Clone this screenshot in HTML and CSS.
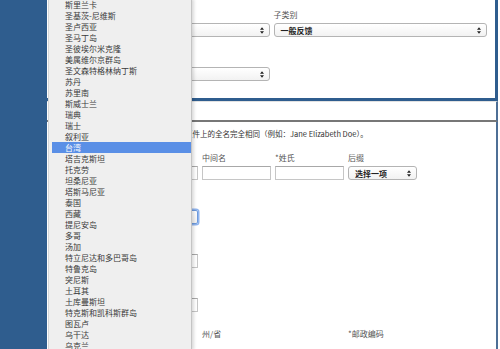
FILE: index.html
```html
<!DOCTYPE html>
<html lang="zh-CN">
<head>
  <meta charset="UTF-8">
  <title>联系我们</title>
  <link rel="stylesheet" href="styles.css">
</head>
<body>
  <div class="page">
    <aside class="side"></aside>

    <main class="main">
      <!-- 问题类别 -->
      <section class="panel panel-top">
        <div class="row two">
          <div class="field">
            <label>*类别</label>
            <div class="select"><span>请选择</span><svg class="arrows" viewBox="0 0 5 8"><path d="M2.5 0L5 3H0z M2.5 8L0 5h5z"/></svg></div>
          </div>
          <div class="field">
            <label>子类别</label>
            <div class="select"><span>一般反馈</span><svg class="arrows" viewBox="0 0 5 8"><path d="M2.5 0L5 3H0z M2.5 8L0 5h5z"/></svg></div>
          </div>
        </div>
        <div class="row two">
          <div class="field">
            <label>*主题</label>
            <div class="select"><span>选择一项</span><svg class="arrows" viewBox="0 0 5 8"><path d="M2.5 0L5 3H0z M2.5 8L0 5h5z"/></svg></div>
          </div>
        </div>
      </section>

      <section class="panel panel-strip">
        <h2>联系信息</h2>
      </section>

      <!-- 个人信息 -->
      <section class="panel panel-form">
        <p class="note">*请确保您输入的姓名与政府签发的身份证件上的全名完全相同（例如：Jane Elizabeth Doe）。</p>

        <div class="row five">
          <div class="field">
            <label>称谓</label>
            <div class="select"><span>选择一项</span><svg class="arrows" viewBox="0 0 5 8"><path d="M2.5 0L5 3H0z M2.5 8L0 5h5z"/></svg></div>
          </div>
          <div class="field"><label>*名字</label><input type="text"></div>
          <div class="field"><label>中间名</label><input type="text"></div>
          <div class="field"><label>*姓氏</label><input type="text"></div>
          <div class="field">
            <label>后缀</label>
            <div class="select"><span>选择一项</span><svg class="arrows" viewBox="0 0 5 8"><path d="M2.5 0L5 3H0z M2.5 8L0 5h5z"/></svg></div>
          </div>
        </div>

        <div class="row five">
          <div class="field span2">
            <label>*国家/地区</label>
            <div class="select focused"><span>台湾</span><svg class="arrows" viewBox="0 0 5 8"><path d="M2.5 0L5 3H0z M2.5 8L0 5h5z"/></svg></div>
          </div>
        </div>

        <div class="row five">
          <div class="field span2"><label>*地址 1</label><input type="text"></div>
        </div>

        <div class="row five">
          <div class="field span2"><label>地址 2</label><input type="text"></div>
        </div>

        <div class="row five">
          <div class="field span2"><label>*城市</label></div>
          <div class="field span2"><label>州/省</label></div>
          <div class="field"><label>*邮政编码</label></div>
        </div>
      </section>
    </main>

    <!-- 打开的国家下拉列表 -->
    <ul class="menu">
      <li>斯里兰卡</li>
      <li>圣基茨-尼维斯</li>
      <li>圣卢西亚</li>
      <li>圣马丁岛</li>
      <li>圣彼埃尔米克隆</li>
      <li>美属维尔京群岛</li>
      <li>圣文森特格林纳丁斯</li>
      <li>苏丹</li>
      <li>苏里南</li>
      <li>斯威士兰</li>
      <li>瑞典</li>
      <li>瑞士</li>
      <li>叙利亚</li>
      <li class="selected">台湾</li>
      <li>塔吉克斯坦</li>
      <li>托克劳</li>
      <li>坦桑尼亚</li>
      <li>塔斯马尼亚</li>
      <li>泰国</li>
      <li>西藏</li>
      <li>提尼安岛</li>
      <li>多哥</li>
      <li>汤加</li>
      <li>特立尼达和多巴哥岛</li>
      <li>特鲁克岛</li>
      <li>突尼斯</li>
      <li>土耳其</li>
      <li>土库曼斯坦</li>
      <li>特克斯和凯科斯群岛</li>
      <li>图瓦卢</li>
      <li>乌干达</li>
      <li>乌克兰</li>
    </ul>
  </div>
</body>
</html>
```

FILE: styles.css
```css
/* 页面整体 */
body {
  margin: 0;
  background: #fff;
  font-family: "Noto Sans CJK SC", "Noto Sans", sans-serif;
  color: #333;
}

.page {
  position: relative;
  display: flex;
  height: 349px;
  overflow: hidden;
}

/* 左侧蓝色栏 */
.side {
  width: 47px;
  flex-shrink: 0;
  background: #2f5d8e;
}

.main {
  width: 451px;
  flex-shrink: 0;
  display: flex;
  flex-direction: column;
}

.panel {
  box-sizing: border-box;
  background: #fff;
}

/* 顶部面板，蓝色边框 */
.panel-top {
  height: 106px;
  padding: 10px 8px 0 9px;
  border-right: 3px solid #2f5d8e;
  border-bottom: 3px solid #2f5d8e;
}

.panel-strip {
  height: 27px;
  padding: 6px 9px 0;
  border-top: 1px solid #e2e2e2;
  border-right: 2px solid #4d6f96;
  border-bottom: 2px solid #777;
}

.panel-strip h2 {
  margin: 0;
  font-size: 9px;
  line-height: 12px;
  color: #333;
}

.panel-form {
  flex-grow: 1;
  padding: 7px 8px 0 9px;
  border-right: 2px solid #4d6f96;
}

.note {
  margin: 0 0 14px;
  text-indent: -2px;
  font-size: 7.5px;
  line-height: 10px;
  color: #333;
  white-space: nowrap;
}

/* 表单行 */
.row {
  display: grid;
  column-gap: 4px;
  margin-bottom: 17px;
}

.row.two {
  grid-template-columns: 1fr 1fr;
}

.row.five {
  grid-template-columns: repeat(5, 69px);
}

.span2 {
  grid-column: span 2;
}

.field label {
  display: block;
  font-size: 8px;
  line-height: 10px;
  margin-bottom: 3px;
  color: #555;
  white-space: nowrap;
}

.field input {
  display: block;
  box-sizing: border-box;
  width: 100%;
  height: 14px;
  margin: 0;
  padding: 0 3px;
  border: 1px solid #c6c6c6;
  border-top-color: #a8a8a8;
  background: #fff;
}

/* 下拉框 */
.select {
  box-sizing: border-box;
  height: 14px;
  display: flex;
  align-items: center;
  justify-content: space-between;
  padding: 0 5px 0 6px;
  border: 1px solid #b4b4b4;
  border-radius: 3px;
  background: linear-gradient(#fff, #f2f2f2);
  font-size: 8px;
  font-weight: bold;
  color: #222;
}

.select.focused {
  border-color: #6f9bdc;
  border-radius: 2px;
  box-shadow: 0 0 0 1.5px #8fb4ee;
}

.arrows {
  width: 4px;
  height: 7px;
  fill: #222;
}

/* 展开的国家列表 */
.menu {
  position: absolute;
  left: 48px;
  top: -1px;
  width: 144px;
  height: 351px;
  box-sizing: border-box;
  margin: 0;
  padding: 0 0 0 3px;
  list-style: none;
  background: #efefef;
  border-left: 1px solid #d6d6d6;
  border-right: 1px solid #c4c4c4;
  box-shadow: 2px 0 3px rgba(0, 0, 0, 0.15);
}

.menu li {
  height: 11px;
  padding-left: 13px;
  font-size: 8px;
  line-height: 11px;
  color: #3a3a3a;
  white-space: nowrap;
}

.menu li.selected {
  background: #5a8fe6;
  color: #fff;
}
```
